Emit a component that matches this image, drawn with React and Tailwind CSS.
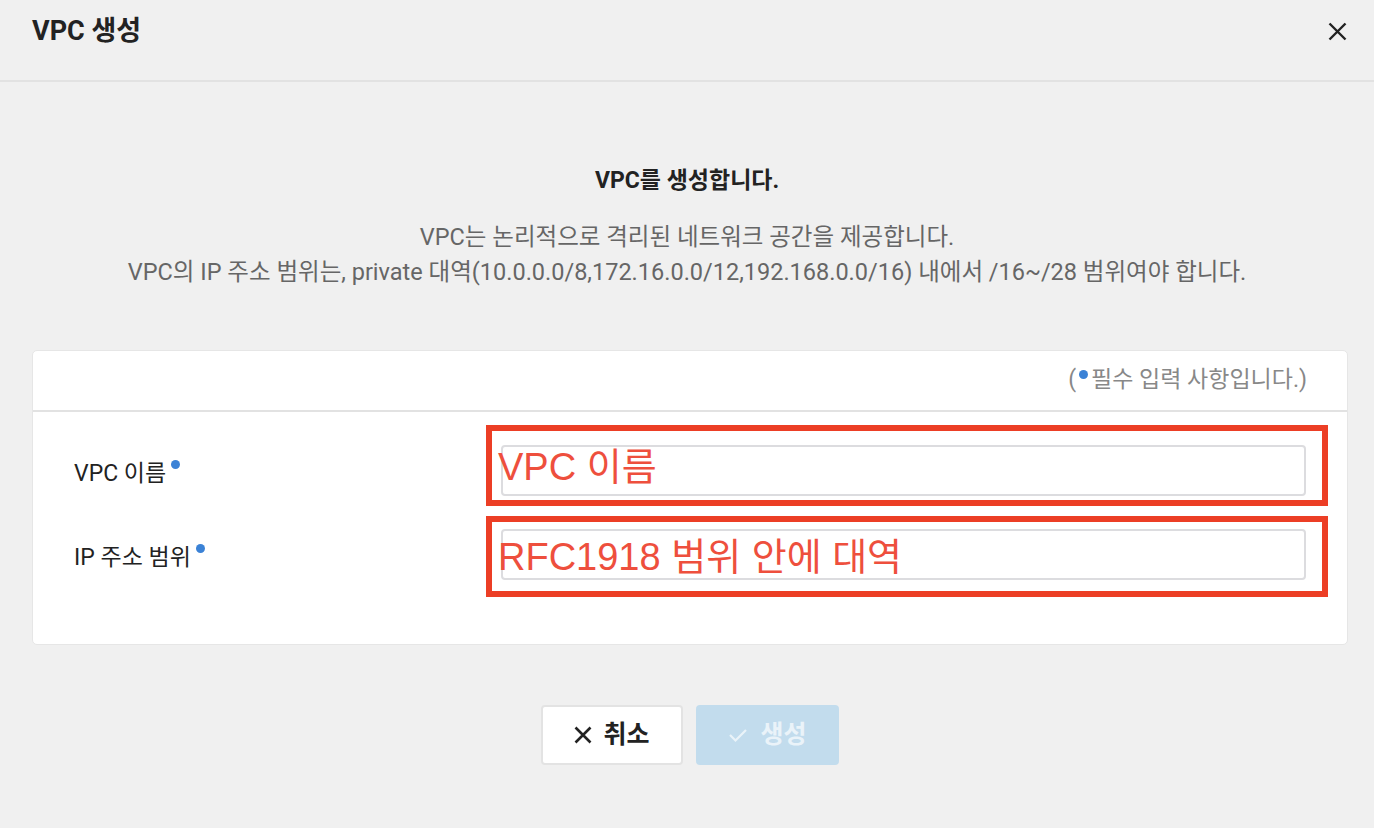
import React from "react";

const font = { fontFamily: 'Roboto, "Noto Sans CJK KR", sans-serif' };

function Row({ label, hint, boxTop, boxBottom, hintShift }) {
  return (
    <div className="flex items-center h-[51px]">
      <div className="w-[468px] pl-[41px] pt-[7px] text-[23px] text-[#222] flex items-center">
        <span>{label}</span>
        <span className="inline-block w-[9px] h-[9px] rounded-full bg-[#3b82d6] ml-[5px] relative top-[-10px]" />
      </div>
      <div className="relative flex-1 mr-[41px] h-[51px]">
        <div className="h-full border-2 border-[#dcdcdf] rounded-[4px] bg-white" />
        <div
          className="absolute left-[-15px] right-[-22px] border-[6px] border-[#ec3e25] pointer-events-none"
          style={{ top: -boxTop, bottom: -boxBottom }}
        />
        <span
          className="absolute left-[-3px] top-1/2 text-[38px] text-[#ee4f3d] leading-none whitespace-nowrap"
          style={{ fontFamily: '"Liberation Sans", "Noto Sans CJK KR", sans-serif', transform: `translateY(calc(-50% + ${hintShift}px))` }}
        >
          {hint}
        </span>
      </div>
    </div>
  );
}

export default function App() {
  return (
    <div className="w-[1374px] h-[828px] bg-[#f0f0f0] flex flex-col" style={font}>
      <div className="h-[82px] flex items-center justify-between pl-[32px] pr-[27px] pb-[18px] border-b-2 border-[#e2e2e2]">
        <h1 className="text-[27px] font-bold text-[#222]">VPC 생성</h1>
        <svg width="19" height="19" viewBox="0 0 19 19">
          <path d="M1.5 1.5L17.5 17.5M17.5 1.5L1.5 17.5" stroke="#222" strokeWidth="2.4" />
        </svg>
      </div>
      <div className="flex flex-col items-center pt-[85px]">
        <div className="text-[23px] leading-[28px] font-bold text-[#222]">VPC를 생성합니다.</div>
        <div className="mt-[25px] text-[23.5px] leading-[35px] text-[#666] text-center">
          <div>VPC는 논리적으로 격리된 네트워크 공간을 제공합니다.</div>
          <div>VPC의 IP 주소 범위는, private 대역(10.0.0.0/8,172.16.0.0/12,192.168.0.0/16) 내에서 /16~/28 범위여야 합니다.</div>
        </div>
      </div>
      <div className="ml-[32px] mr-[26px] mt-[60px] h-[295px] bg-white border border-[#e6e6e6] rounded-[5px] flex flex-col">
        <div className="h-[61px] border-b-2 border-[#e2e2e2] flex items-center justify-end pr-[40px] text-[23px] text-[#888]">
          <span>(</span>
          <span className="inline-block w-[9px] h-[9px] rounded-full bg-[#3b82d6] relative top-[-6px] mx-[3px]" />
          <span>필수 입력 사항입니다.)</span>
        </div>
        <div className="pt-[33px] flex flex-col gap-[33px]">
          <Row label="VPC 이름" hint="VPC 이름" boxTop={20} boxBottom={10} hintShift={-4} />
          <Row label="IP 주소 범위" hint="RFC1918 범위 안에 대역" boxTop={13} boxBottom={17} hintShift={2} />
        </div>
      </div>
      <div className="flex justify-center gap-[13px] mt-[60px] ml-[6px]">
        <button className="w-[142px] h-[60px] bg-white border-2 border-[#e3e3e3] rounded-[4px] flex items-center justify-center gap-[11px] text-[25px] font-bold text-[#222]">
          <svg width="18" height="18" viewBox="0 0 18 18">
            <path d="M1.5 1.5L16.5 16.5M16.5 1.5L1.5 16.5" stroke="#222" strokeWidth="2.6" />
          </svg>
          취소
        </button>
        <button className="w-[143px] h-[60px] bg-[#c2dced] rounded-[4px] flex items-center justify-center gap-[12px] text-[25px] font-bold text-[#eaf3f9]">
          <svg width="20" height="16" viewBox="0 0 20 16">
            <path d="M2 8L7.5 13.5L18 3" stroke="#eaf3f9" strokeWidth="2.2" fill="none" />
          </svg>
          생성
        </button>
      </div>
    </div>
  );
}
